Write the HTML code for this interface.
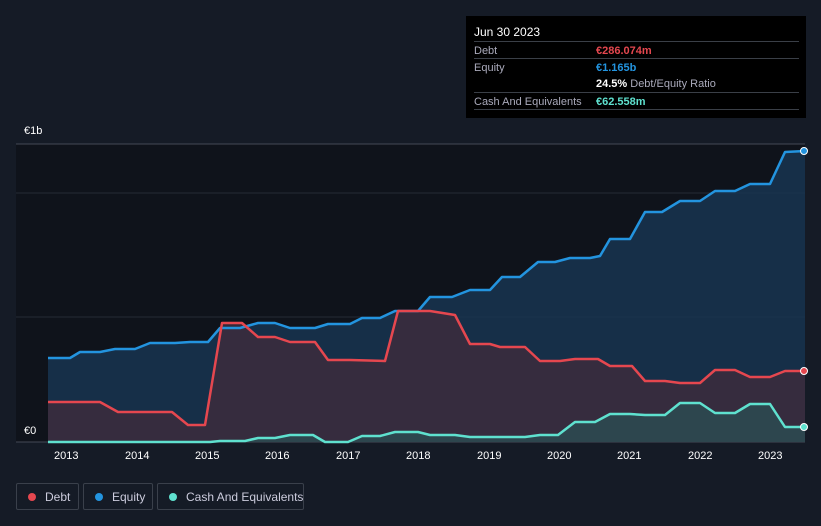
<!DOCTYPE html><html><head><style>
body{margin:0;width:821px;height:526px;background:#151b26;font-family:"Liberation Sans",sans-serif;overflow:hidden;position:relative}
.tt{position:absolute;left:466px;top:16px;width:340px;height:102px;background:#000;color:#fff;font-size:11px}
.tt .h{position:absolute;left:8px;top:9px;font-size:12px}
.row{position:absolute;left:8px;width:325px;border-top:1px solid #3a3f47;height:16px}
.row span{position:absolute;top:3px;white-space:nowrap}
.l{left:0;color:#aab}
.v{left:122px;font-weight:bold}
.leg{position:absolute;top:483px;height:27px;border:1px solid #3a404b;border-radius:2px;color:#ccd;font-size:12px;box-sizing:border-box}
.leg i{position:absolute;left:11px;top:9px;width:8px;height:8px;border-radius:50%}
.leg span{position:absolute;left:28px;top:6px;white-space:nowrap}
.ax{position:absolute;color:#fff;font-size:11px}
</style></head><body>
<svg width="821" height="526" style="position:absolute;left:0;top:0">
<rect x="16" y="144" width="789" height="298" fill="#0f131b"/>
<line x1="16" y1="144" x2="805" y2="144" stroke="#444a55"/>
<line x1="16" y1="193" x2="805" y2="193" stroke="#262b35"/>
<line x1="16" y1="317" x2="805" y2="317" stroke="#262b35"/>
<line x1="16" y1="442" x2="805" y2="442" stroke="#444a55"/>
<path d="M48,358 L70,358 L80,352 L100,352 L115,349 L135,349 L150,343 L175,343 L190,342 L208,342 L220,328 L240,328 L258,323 L275,323 L290,328 L315,328 L328,324 L350,324 L362,318 L380,318 L395,311 L418,311 L430,297 L452,297 L470,290 L490,290 L502,277 L520,277 L538,262 L555,262 L570,258 L590,258 L600,256 L610,239 L630,239 L645,212 L662,212 L680,201 L700,201 L715,191 L735,191 L750,184 L770,184 L785,152 L805,151 L805,442 L48,442Z" fill="#173550" fill-opacity="0.85"/>
<path d="M48,402 L100,402 L118,412 L172,412 L188,425 L205,425 L222,323 L242,323 L258,337 L275,337 L290,342 L315,342 L328,360 L350,360 L385,361 L398,311 L430,311 L455,315 L470,344 L490,344 L500,347 L525,347 L540,361 L560,361 L575,359 L598,359 L610,366 L632,366 L645,381 L665,381 L680,383 L700,383 L715,370 L735,370 L750,377 L770,377 L785,371 L805,371 L805,442 L48,442Z" fill="#3a2c3d" fill-opacity="0.9"/>
<path d="M48,442 L210,442 L220,441 L245,441 L258,438 L275,438 L290,435 L313,435 L325,442 L348,442 L362,436 L380,436 L395,432 L418,432 L430,435 L455,435 L470,437 L525,437 L540,435 L558,435 L575,422 L595,422 L610,414 L630,414 L645,415 L665,415 L680,403 L700,403 L715,413 L735,413 L750,404 L770,404 L785,427 L805,427 L805,442Z" fill="#2c4d52" fill-opacity="0.8"/>
<path d="M48,358 L70,358 L80,352 L100,352 L115,349 L135,349 L150,343 L175,343 L190,342 L208,342 L220,328 L240,328 L258,323 L275,323 L290,328 L315,328 L328,324 L350,324 L362,318 L380,318 L395,311 L418,311 L430,297 L452,297 L470,290 L490,290 L502,277 L520,277 L538,262 L555,262 L570,258 L590,258 L600,256 L610,239 L630,239 L645,212 L662,212 L680,201 L700,201 L715,191 L735,191 L750,184 L770,184 L785,152 L805,151" fill="none" stroke="#2394df" stroke-width="2.5" stroke-linejoin="round"/>
<path d="M48,402 L100,402 L118,412 L172,412 L188,425 L205,425 L222,323 L242,323 L258,337 L275,337 L290,342 L315,342 L328,360 L350,360 L385,361 L398,311 L430,311 L455,315 L470,344 L490,344 L500,347 L525,347 L540,361 L560,361 L575,359 L598,359 L610,366 L632,366 L645,381 L665,381 L680,383 L700,383 L715,370 L735,370 L750,377 L770,377 L785,371 L805,371" fill="none" stroke="#e5474f" stroke-width="2.5" stroke-linejoin="round"/>
<path d="M48,442 L210,442 L220,441 L245,441 L258,438 L275,438 L290,435 L313,435 L325,442 L348,442 L362,436 L380,436 L395,432 L418,432 L430,435 L455,435 L470,437 L525,437 L540,435 L558,435 L575,422 L595,422 L610,414 L630,414 L645,415 L665,415 L680,403 L700,403 L715,413 L735,413 L750,404 L770,404 L785,427 L805,427" fill="none" stroke="#5fe1cf" stroke-width="2.5" stroke-linejoin="round"/>
<circle cx="804" cy="151" r="3.5" fill="#2394df" stroke="#fff" stroke-width="1"/>
<circle cx="804" cy="371" r="3.5" fill="#e5474f" stroke="#fff" stroke-width="1"/>
<circle cx="804" cy="427" r="3.5" fill="#5fe1cf" stroke="#fff" stroke-width="1"/>
</svg>
<div class="ax" style="left:24px;top:125px">€1b</div>
<div class="ax" style="left:24px;top:425px">€0</div>
<div class="ax" style="left:54px;top:450px">2013</div><div class="ax" style="left:125px;top:450px">2014</div><div class="ax" style="left:195px;top:450px">2015</div><div class="ax" style="left:265px;top:450px">2016</div><div class="ax" style="left:336px;top:450px">2017</div><div class="ax" style="left:406px;top:450px">2018</div><div class="ax" style="left:477px;top:450px">2019</div><div class="ax" style="left:547px;top:450px">2020</div><div class="ax" style="left:617px;top:450px">2021</div><div class="ax" style="left:688px;top:450px">2022</div><div class="ax" style="left:758px;top:450px">2023</div>
<div class="tt"><div class="h">Jun 30 2023</div>
<div class="row" style="top:25px"><span class="l">Debt</span><span class="v" style="color:#e5474f">€286.074m</span></div>
<div class="row" style="top:42px"><span class="l">Equity</span><span class="v" style="color:#2394df">€1.165b</span></div>
<div class="row" style="top:59px;border:0"><span class="v" style="color:#fff">24.5% <b style="color:#aab;font-weight:normal">Debt/Equity Ratio</b></span></div>
<div class="row" style="top:76px;border-bottom:1px solid #3a3f47"><span class="l">Cash And Equivalents</span><span class="v" style="color:#5fe1cf">€62.558m</span></div>
</div>
<div class="leg" style="left:16px;width:63px"><i style="background:#e5474f"></i><span>Debt</span></div>
<div class="leg" style="left:83px;width:70px"><i style="background:#2394df"></i><span>Equity</span></div>
<div class="leg" style="left:157px;width:147px"><i style="background:#5fe1cf"></i><span>Cash And Equivalents</span></div>
</body></html>
